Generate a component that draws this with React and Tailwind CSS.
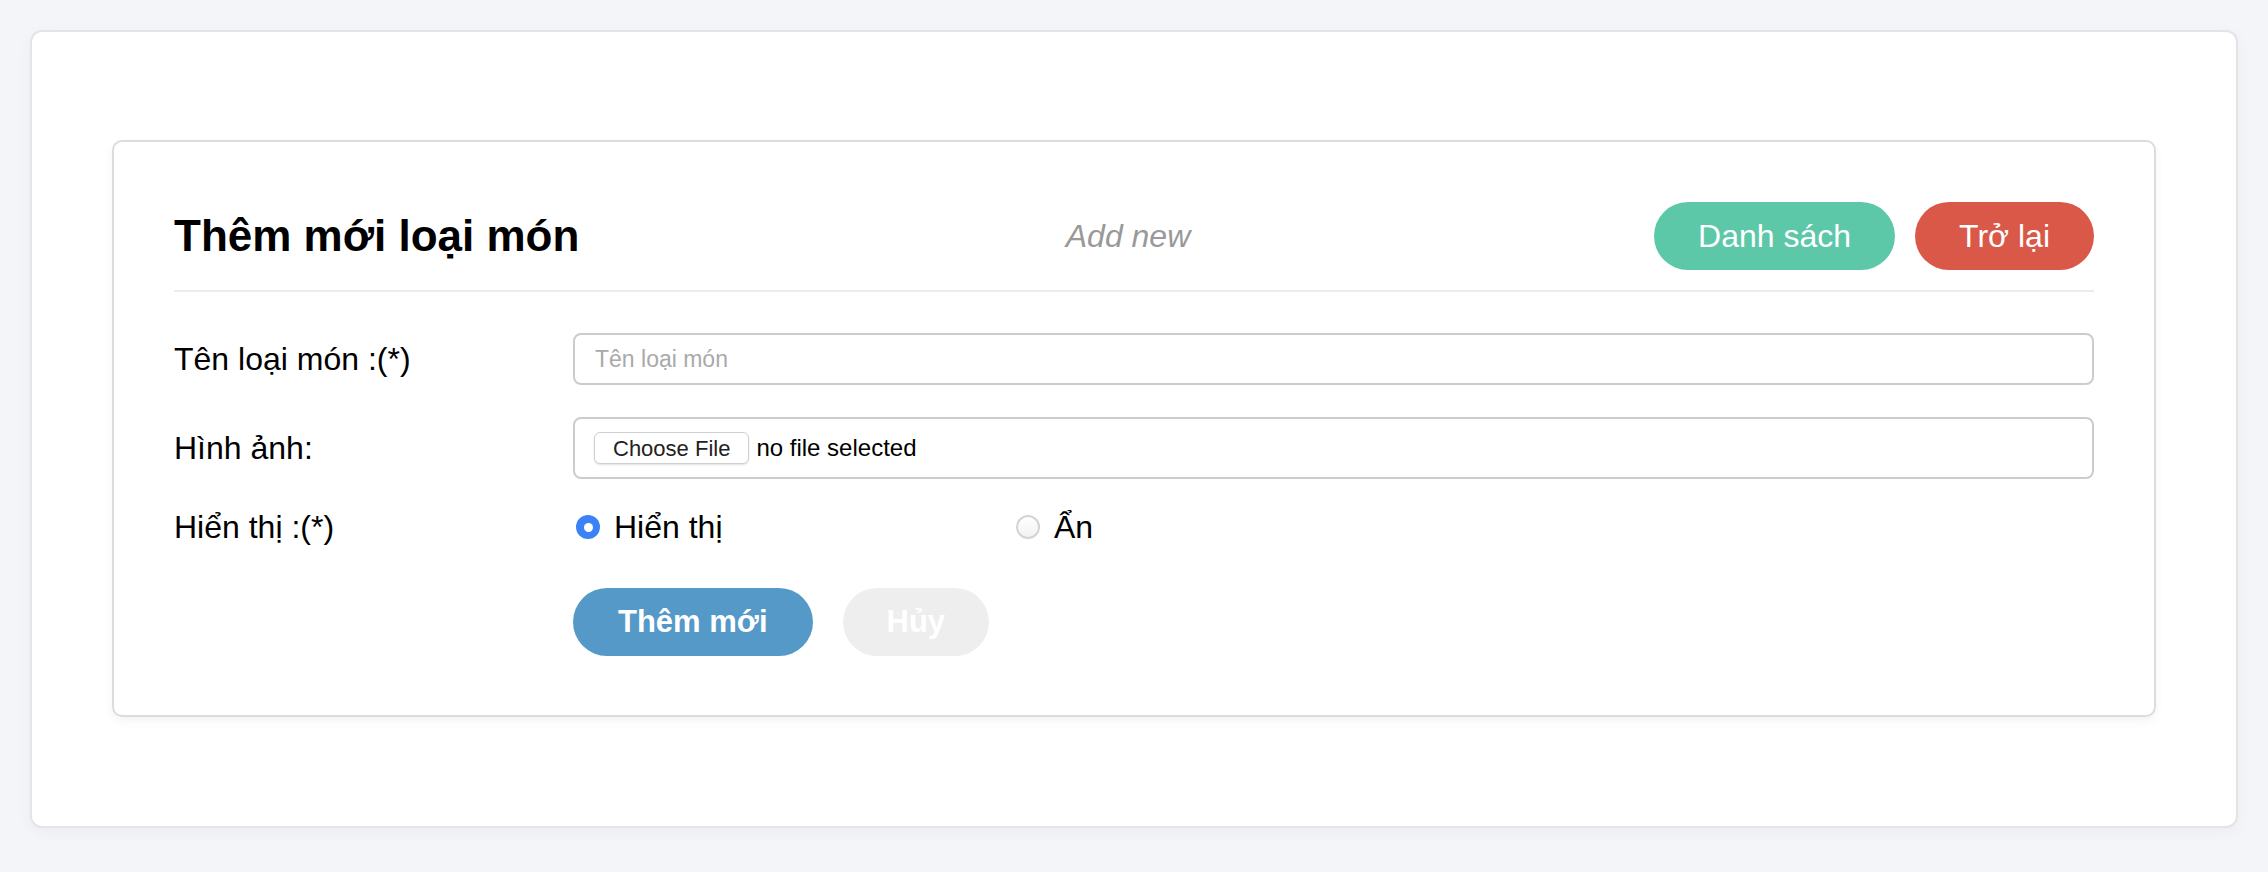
import React, { useState } from 'react';

const font = { fontFamily: '"Liberation Sans", Arial, Helvetica, sans-serif' };

const Radio = ({ checked, label, onClick }) => (
  <label onClick={onClick} className="flex items-center cursor-pointer select-none">
    {checked ? (
      <span className="w-[24px] h-[24px] rounded-full bg-[#3b82f6] flex items-center justify-center">
        <span className="w-[9px] h-[9px] rounded-full bg-white" />
      </span>
    ) : (
      <span className="w-[24px] h-[24px] rounded-full border-2 border-[#d4d4d4] bg-gradient-to-b from-white to-[#f2f2f2]" />
    )}
    <span className="ml-[14px] text-[32px] leading-[36px] text-black">{label}</span>
  </label>
);

const App = () => {
  const [visible, setVisible] = useState(true);

  return (
    <div className="min-h-screen bg-[#f4f5f9] p-[30px]" style={font}>
      <div className="bg-white border-2 border-[#e4e4e7] rounded-[12px] shadow-[0_4px_16px_rgba(0,0,0,0.04)] px-[80px] pt-[108px] pb-[109px]">
        <div className="border-2 border-[#dcdcdc] rounded-[10px] shadow-[0_4px_10px_rgba(0,0,0,0.05)] px-[60px] pt-[60px] pb-[59px]">
          {/* Header */}
          <div className="grid grid-cols-3 items-center h-[68px]">
            <h1 className="text-[44px] font-bold text-black leading-none">Thêm mới loại món</h1>
            <p className="text-center text-[32px] italic text-[#999999] pr-[12px]">Add new</p>
            <div className="flex justify-end gap-[20px]">
              <button className="h-[68px] px-[44px] rounded-full bg-[#5cc8a8] text-white text-[32px]">
                Danh sách
              </button>
              <button className="h-[68px] px-[44px] rounded-full bg-[#d95848] text-white text-[32px]">
                Trở lại
              </button>
            </div>
          </div>
          <div className="mt-[20px] h-[2px] bg-[#ececec]" />

          {/* Form */}
          <form className="mt-[41px]" onSubmit={(e) => e.preventDefault()}>
            <div className="flex items-center">
              <label className="w-[399px] shrink-0 text-[32px] text-black">Tên loại món :(*)</label>
              <input
                type="text"
                placeholder="Tên loại món"
                className="flex-1 h-[52px] border-2 border-[#cccccc] rounded-[8px] px-[20px] text-[23px] outline-none placeholder:text-[#a9a9a9]"
              />
            </div>

            <div className="flex items-center mt-[32px]">
              <label className="w-[399px] shrink-0 text-[32px] text-black">Hình ảnh:</label>
              <div className="flex-1 h-[62px] border-2 border-[#cccccc] rounded-[8px] pl-[19px] flex items-center">
                <span className="h-[32px] px-[18px] flex items-center bg-white border border-[#d0d0d0] rounded-[6px] shadow-[0_1px_2px_rgba(0,0,0,0.12)] text-[22px] text-[#222]">
                  Choose File
                </span>
                <span className="ml-[7px] text-[24px] text-black">no file selected</span>
              </div>
            </div>

            <div className="flex items-center mt-[30px]">
              <label className="w-[399px] shrink-0 text-[32px] leading-[36px] text-black">Hiển thị :(*)</label>
              <div className="flex items-center pl-[3px]">
                <div className="w-[440px]">
                  <Radio checked={visible} label="Hiển thị" onClick={() => setVisible(true)} />
                </div>
                <Radio checked={!visible} label="Ẩn" onClick={() => setVisible(false)} />
              </div>
            </div>

            <div className="flex items-center mt-[43px] pl-[399px] gap-[30px]">
              <button className="h-[68px] px-[45px] rounded-full bg-[#5499c7] text-white text-[31px] font-bold">
                Thêm mới
              </button>
              <button type="button" className="h-[68px] px-[44px] rounded-full bg-[#eeeeee] text-white text-[31px] font-bold">
                Hủy
              </button>
            </div>
          </form>
        </div>
      </div>
    </div>
  );
};

export default App;
